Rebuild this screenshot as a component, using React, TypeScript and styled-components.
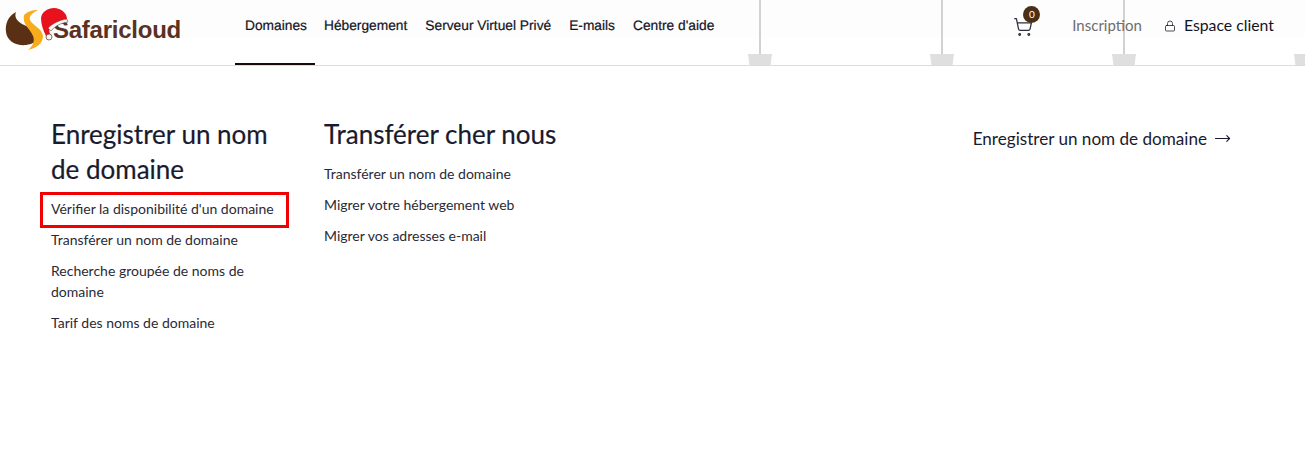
import styled, { createGlobalStyle } from "styled-components";
import { ShoppingCart, Lock, MoveRight } from "lucide-react";

const GlobalStyle = createGlobalStyle`
  body {
    margin: 0;
    background: #fff;
    font-family: "Lato", "Liberation Sans", sans-serif;
  }
`;

const Header = styled.header`
  position: relative;
  height: 65px;
  display: flex;
  align-items: flex-start;
  border-bottom: 1px solid #dcdcdc;
  overflow: hidden;
  background: linear-gradient(#fdfdfd 37px, #fff 37px);
`;
const Lamp = styled.div<{ $left: number }>`
  position: absolute;
  top: 0;
  left: ${(p) => p.$left}px;
  width: 24px;
  height: 65px;
  &::before {
    content: "";
    position: absolute;
    left: 11px;
    top: 0;
    width: 2px;
    height: 54px;
    background: #d2d2d2;
  }
  &::after {
    content: "";
    position: absolute;
    left: 0;
    top: 54px;
    width: 24px;
    height: 11px;
    background: #dfdfdf;
    clip-path: polygon(0 0, 100% 0, 94% 100%, 6% 100%);
  }
`;
const LogoBox = styled.div`
  width: 235px;
  height: 60px;
  flex-shrink: 0;
  position: relative;
  svg {
    position: relative;
    z-index: 1;
  }
`;
const LogoText = styled.span`
  position: absolute;
  left: 53px;
  top: 16px;
  font-family: "Liberation Sans", sans-serif;
  font-weight: 700;
  font-size: 24px;
  letter-spacing: -0.25px;
  color: #5a3122;
`;
const Nav = styled.nav`
  display: flex;
  position: relative;
`;
const NavItem = styled.a<{ $active?: boolean }>`
  height: 65px;
  box-sizing: border-box;
  padding: 18px 9px 0;
  font-family: "Liberation Sans", sans-serif;
  font-size: 13.75px;
  line-height: 16px;
  text-rendering: geometricPrecision;
  color: #14141f;
  -webkit-text-stroke: 0.2px #14141f;
  white-space: nowrap;
  border-bottom: 2px solid ${(p) => (p.$active ? "#1a0a0a" : "transparent")};
  &:first-child {
    padding-left: 10px;
    padding-right: 0;
    width: 80px;
  }
`;
const Right = styled.div`
  position: absolute;
  top: 0;
  right: 31px;
  height: 52px;
  display: flex;
  align-items: center;
`;
const CartWrap = styled.div`
  position: relative;
  width: 19px;
  height: 20px;
  margin-right: 40px;
  margin-top: 2px;
  color: #2c2c3c;
`;
const CartBadge = styled.span`
  position: absolute;
  left: 10px;
  top: -11px;
  width: 17px;
  height: 17px;
  border-radius: 50%;
  background: #4a2f16;
  color: #fff;
  font-size: 10px;
  line-height: 17px;
  text-align: center;
`;
const SignUp = styled.a`
  font-size: 15px;
  color: #6d6d6d;
  margin-right: 22px;
  margin-top: -2px;
`;
const ClientLink = styled.a`
  display: flex;
  align-items: center;
  gap: 8px;
  font-size: 15.8px;
  color: #14141f;
  margin-top: -3px;
  svg {
    margin-top: 3px;
  }
`;
const Main = styled.main`
  display: flex;
  padding: 51px 74px 0 51px;
  align-items: flex-start;
`;
const Column = styled.section<{ $width: number }>`
  width: ${(p) => p.$width}px;
  flex-shrink: 0;
`;
const Title = styled.h2`
  margin: 0 0 6px;
  font-size: 26px;
  font-weight: 400;
  line-height: 35px;
  color: #1a1a2e;
  -webkit-text-stroke: 0.2px #1a1a2e;
`;
const LinkList = styled.ul`
  list-style: none;
  margin: 0;
  padding: 0;
`;
const LinkItem = styled.li<{ $boxed?: boolean }>`
  position: relative;
  font-size: 14px;
  line-height: 21px;
  color: #2a2a36;
  padding: 5px 0;
  ${(p) =>
    p.$boxed &&
    `
    &::after {
      content: "";
      position: absolute;
      left: -11px;
      top: -1px;
      width: 249px;
      height: 36px;
      border: 3px solid #f00000;
      box-sizing: border-box;
    }
  `}
`;
const CallToAction = styled.a`
  margin-left: auto;
  display: flex;
  align-items: center;
  gap: 7px;
  font-size: 17.1px;
  line-height: 35px;
  margin-top: 4px;
  color: #1a1a2e;
`;

function LogoMark() {
  return (
    <svg width="80" height="60" viewBox="0 0 80 60">
      <path
        d="M16 12C8 16 5 24 6 32c1 9 10 14 20 13 7-1 12-4 13-8-2-6-10-10-17-13-5-3-8-7-6-12z"
        fill="#5a3015"
      />
      <path
        d="M24 15c4-4 9-5 14-5-6 3-9 6-8 10 2 5 12 8 13 16 0 7-6 12-15 14 5-4 7-9 5-14-3-8-11-11-9-21z"
        fill="#f8ac1c"
      />
      <path d="M41 18C42 10 52 6 59 9c5 2 8 6 8 10-8 1-14 5-18 9l1 7-4 1c-3-6-5-12-5-18z" fill="#e8121c" />
      <path
        d="M48 28c5-5 12-8 19-9l1 3c-7 1-13 4-17 9z"
        fill="#f4f4f4"
        stroke="#5a3122"
        strokeWidth="0.5"
      />
      <circle cx="49" cy="37" r="3" fill="#f4f4f4" stroke="#5a3122" strokeWidth="0.7" />
    </svg>
  );
}

export default function App() {
  return (
    <>
      <GlobalStyle />
      <Header>
        <Lamp $left={748} />
        <Lamp $left={930} />
        <Lamp $left={1112} />
        <Lamp $left={1294} />
        <LogoBox>
          <LogoMark />
          <LogoText>Safaricloud</LogoText>
        </LogoBox>
        <Nav>
          <NavItem $active>Domaines</NavItem>
          <NavItem>Hébergement</NavItem>
          <NavItem>Serveur Virtuel Privé</NavItem>
          <NavItem>E-mails</NavItem>
          <NavItem>Centre d'aide</NavItem>
        </Nav>
        <Right>
          <CartWrap>
            <ShoppingCart size={20} strokeWidth={1.5} />
            <CartBadge>0</CartBadge>
          </CartWrap>
          <SignUp>Inscription</SignUp>
          <ClientLink>
            <Lock size={12} strokeWidth={1.5} />
            Espace client
          </ClientLink>
        </Right>
      </Header>
      <Main>
        <Column $width={273}>
          <Title>
            Enregistrer un nom
            <br />
            de domaine
          </Title>
          <LinkList>
            <LinkItem $boxed>Vérifier la disponibilité d'un domaine</LinkItem>
            <LinkItem>Transférer un nom de domaine</LinkItem>
            <LinkItem>
              Recherche groupée de noms de
              <br />
              domaine
            </LinkItem>
            <LinkItem>Tarif des noms de domaine</LinkItem>
          </LinkList>
        </Column>
        <Column $width={320}>
          <Title>Transférer cher nous</Title>
          <LinkList>
            <LinkItem>Transférer un nom de domaine</LinkItem>
            <LinkItem>Migrer votre hébergement web</LinkItem>
            <LinkItem>Migrer vos adresses e-mail</LinkItem>
          </LinkList>
        </Column>
        <CallToAction>
          Enregistrer un nom de domaine
          <MoveRight size={17} strokeWidth={1.5} />
        </CallToAction>
      </Main>
    </>
  );
}
